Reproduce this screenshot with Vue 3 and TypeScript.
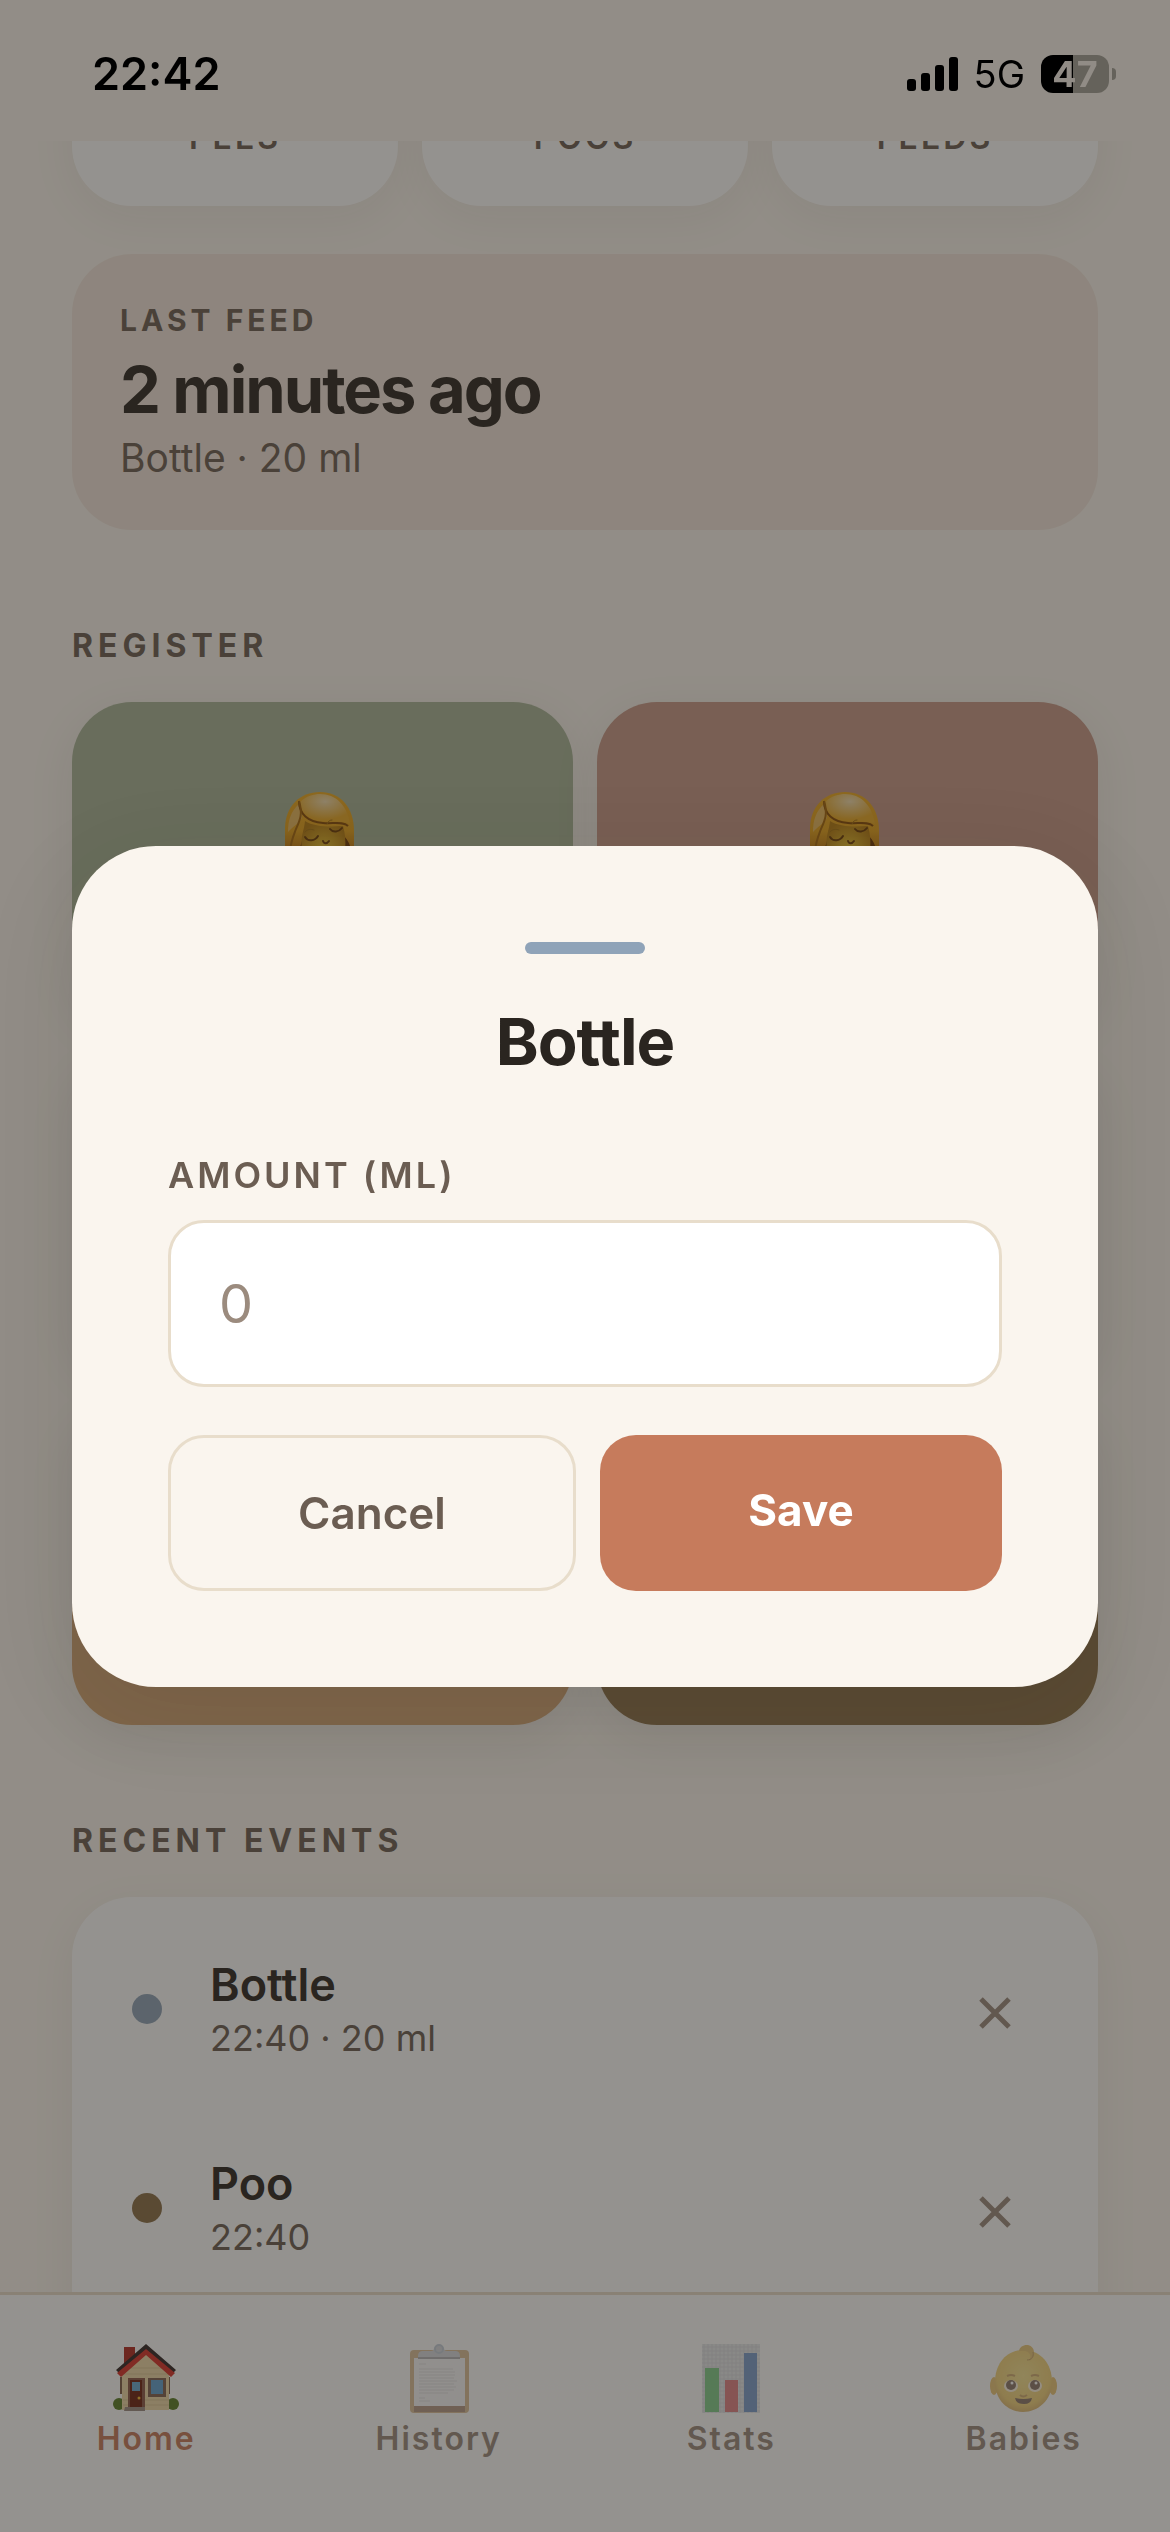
<script setup lang="ts">
import { ref } from 'vue'

interface Tile { label: string; tone: string; nursing?: boolean }
interface FeedEvent { id: number; title: string; detail: string; tone: string }
interface Tab { id: string; label: string }

const stats = ['Pees', 'Poos', 'Feeds']

const tiles: Tile[] = [
  { label: 'Left breast', tone: 'sage', nursing: true },
  { label: 'Right breast', tone: 'rose', nursing: true },
  { label: 'Bottle', tone: 'blue wide' },
  { label: 'Pee', tone: 'honey' },
  { label: 'Poo', tone: 'brown' },
]

const events = ref<FeedEvent[]>([
  { id: 1, title: 'Bottle', detail: '22:40 · 20 ml', tone: 'blue' },
  { id: 2, title: 'Poo', detail: '22:40', tone: 'brown' },
])

const tabs: Tab[] = [
  { id: 'home', label: 'Home' },
  { id: 'history', label: 'History' },
  { id: 'stats', label: 'Stats' },
  { id: 'babies', label: 'Babies' },
]
const activeTab = ref('home')
const amount = ref('')

function removeEvent(id: number): void {
  events.value = events.value.filter((e) => e.id !== id)
}
</script>

<template>
  <div class="screen">
    <header class="status">
      <span class="clock">22:42</span>
      <span class="indicators">
        <svg class="signal" viewBox="0 0 52 36" aria-hidden="true">
          <rect x="0" y="23" width="9" height="12" rx="3" />
          <rect x="14" y="17" width="9" height="18" rx="3" />
          <rect x="28" y="9" width="9" height="26" rx="3" />
          <rect x="42" y="1" width="9" height="34" rx="3" />
        </svg>
        <span class="network">5G</span>
        <span class="battery"><span class="level">47</span></span>
        <span class="nub"></span>
      </span>
    </header>

    <main class="scroll">
      <section class="stats">
        <div v-for="s in stats" :key="s" class="stat">{{ s }}</div>
      </section>

      <section class="last">
        <p class="last-label">Last feed</p>
        <p class="last-time">2 minutes ago</p>
        <p class="last-detail">Bottle · 20 ml</p>
      </section>

      <h2 class="section-title">Register</h2>
      <section class="tiles">
        <button v-for="t in tiles" :key="t.label" type="button" class="tile" :class="t.tone" :aria-label="t.label">
          <svg v-if="t.nursing" class="nursing" viewBox="2 0 84 84" aria-hidden="true">
            <defs>
              <linearGradient id="hair" x1="0" y1="0" x2="0" y2="1">
                <stop offset="0" stop-color="#f0ac20" />
                <stop offset="0.5" stop-color="#e8a41c" />
                <stop offset="1" stop-color="#984c04" />
              </linearGradient>
              <radialGradient id="shine" cx="0.5" cy="0.25" r="0.6">
                <stop offset="0" stop-color="#f4deb0" />
                <stop offset="1" stop-color="#ecac28" />
              </radialGradient>
              <radialGradient id="skin" cx="0.5" cy="0.6" r="0.6">
                <stop offset="0" stop-color="#ecc430" />
                <stop offset="1" stop-color="#b87c10" />
              </radialGradient>
            </defs>
            <path d="M6 84V43C6 20 21 6 41 6s34 15 34 39v39z" fill="url(#hair)" />
            <path d="M13 84c2-16 10-19 12-40 10 8 28 6 40 6 8 8 9 20 8 34z" fill="#6c3400" />
            <path d="M23 66C21 50 25 46 26 35c9 6 25 6 38 5 4 14 3 30-3 44H32c-5-5-8-10-9-18z" fill="url(#skin)" />
            <path d="M21 16C27 10 35 8 41 8c16 0 27 11 30 30-11-5-29 1-42-7-5-4-8-9-8-15z" fill="url(#shine)" />
            <path d="M20 18c-8 7-11 16-11 28 3-4 13-10 14-15 0-5-2-8-3-13z" fill="#ecbc60" />
            <path d="M20 15c0 13 9 21 24 22 10 1 20-2 25 3" fill="none" stroke="#8a4c06" stroke-width="2" />
            <path d="M20 15c4 13 1 19-3 28-3 8-5 12-6 22" fill="none" stroke="#a8680c" stroke-width="2" />
            <g fill="none" stroke="#6c3a04" stroke-width="2" stroke-linecap="round">
              <path d="M26 51c3 5 10 4 13-1M51 43c3 4 9 3 12-1" />
              <path d="M26 46c2-3 6-3 9-2M48 38c1-3 3-4 5-4" stroke="#a87412" stroke-width="1" />
              <path d="M44 55c1 3 4 3 6 0" />
            </g>
          </svg>
        </button>
      </section>

      <h2 class="section-title">Recent events</h2>
      <ul class="events">
        <li v-for="e in events" :key="e.id" class="event">
          <span class="dot" :class="e.tone"></span>
          <div class="event-text">
            <p class="event-title">{{ e.title }}</p>
            <p class="event-detail">{{ e.detail }}</p>
          </div>
          <button type="button" class="remove" :aria-label="`Remove ${e.title}`" @click="removeEvent(e.id)">
            <svg viewBox="0 0 88 88" aria-hidden="true">
              <path d="M31 34L59 62M59 34L31 62" fill="none" stroke="currentColor" stroke-width="5" />
            </svg>
          </button>
        </li>
      </ul>
    </main>

    <nav class="tabs">
      <button
        v-for="t in tabs"
        :key="t.id"
        type="button"
        class="tab"
        :class="{ active: t.id === activeTab }"
        @click="activeTab = t.id"
      >
        <svg v-if="t.id === 'home'" class="tab-icon" viewBox="0 0 70 70" aria-hidden="true">
          <ellipse cx="8" cy="61" rx="6" ry="6" fill="#587c26" />
          <ellipse cx="62" cy="61" rx="6" ry="6" fill="#587c26" />
          <path d="M9 34h4v17H9zM55 34h4v17h-4z" fill="#7c5c48" />
          <path d="M13 4h11v22H13z" fill="#b02820" />
          <path d="M11 29L35 7l23 23v37H11z" fill="#eed8a8" />
          <path d="M12 25h46M12 31h46M12 57h46M12 62h46" stroke="#dcc494" stroke-width="1" />
          <path d="M35 1L5 27l4 4L35 8l26 23 4-4z" fill="#302424" />
          <path d="M35 6L6 30l4 4 25-22 25 22 4-4z" fill="#d83028" />
          <path d="M17 35h17v30H17z" fill="#8c5848" />
          <path d="M19 37h12v27H19z" fill="#6c2010" />
          <path d="M21 39h8v9h-8z" fill="#68a8d0" />
          <circle cx="28" cy="55" r="1.5" fill="#f0b830" />
          <path d="M37 35h18v19H37z" fill="#806050" />
          <path d="M40 37h12v14H40z" fill="#60a0d0" />
          <path d="M14 64h20v4H13z" fill="#9c8c84" />
        </svg>

        <svg v-else-if="t.id === 'history'" class="tab-icon" viewBox="0 0 70 70" aria-hidden="true">
          <rect x="6" y="7" width="59" height="63" rx="4" fill="#c89858" />
          <path d="M10 15h51v48H10z" fill="#f4f4f8" />
          <path d="M10 63h51v6H10z" fill="#88583c" />
          <path d="M15 21h7M15 26h34M15 29h36M15 32h36M15 35h35M15 38h38M15 41h35M15 44h37M15 47h35M15 50h29M15 55h6M15 58h11" stroke="#d4d4d8" stroke-width="1" />
          <path d="M14 16v-3q0-5 5-5h8q3 0 3-3 5-6 10 0 0 3 3 3h8q5 0 5 5v3z" fill="#c0c4cc" />
          <path d="M14 14h42v2H14z" fill="#84848c" />
          <circle cx="35" cy="6" r="4" fill="none" stroke="#a0b0c4" stroke-width="2" />
        </svg>

        <svg v-else-if="t.id === 'stats'" class="tab-icon" viewBox="0 0 70 70" aria-hidden="true">
          <path d="M6 1h58v69H6z" fill="#dce0e6" />
          <path
            d="M6 4h58M6 8h58M6 12h58M6 16h58M6 20h58M6 24h58M6 28h58M6 32h58M6 36h58M6 40h58M6 44h58M6 48h58M6 52h58M6 56h58M6 60h58M6 64h58M6 68h58M8 1v69M12 1v69M16 1v69M20 1v69M24 1v69M28 1v69M32 1v69M36 1v69M40 1v69M44 1v69M48 1v69M52 1v69M56 1v69M60 1v69"
            stroke="#c4c8d0"
            stroke-width="1"
          />
          <path d="M9 25h14v44H9z" fill="#30b040" />
          <path d="M29 37h13v32H29z" fill="#d03038" />
          <path d="M48 10h13v59H48z" fill="#2860b0" />
        </svg>

        <svg v-else class="tab-icon" viewBox="0 0 70 70" aria-hidden="true">
          <defs>
            <radialGradient id="face" cx="0.5" cy="0.42" r="0.62">
              <stop offset="0" stop-color="#f4d450" />
              <stop offset="0.75" stop-color="#ecb828" />
              <stop offset="1" stop-color="#c08018" />
            </radialGradient>
          </defs>
          <ellipse cx="5" cy="43" rx="4" ry="9" fill="#e0a424" />
          <ellipse cx="64" cy="43" rx="4" ry="9" fill="#e0a424" />
          <path d="M34 7C17 7 6 21 6 39c0 18 13 30 28 30s29-12 29-30C63 21 52 7 34 7z" fill="url(#face)" />
          <path d="M30 8c1-8 16-9 15 3 0 3-2 6-5 7 3-5 1-9-4-10z" fill="#dca428" />
          <path d="M38 17c5 0 7-4 6-8" fill="none" stroke="#a86c10" stroke-width="1" />
          <ellipse cx="22" cy="43" rx="7" ry="6" fill="#fff0d0" />
          <ellipse cx="46" cy="43" rx="7" ry="6" fill="#fff0d0" />
          <circle cx="22" cy="42" r="5" fill="#40200c" />
          <circle cx="46" cy="42" r="5" fill="#40200c" />
          <circle cx="23" cy="40" r="1.5" fill="#fff" />
          <circle cx="47" cy="40" r="1.5" fill="#fff" />
          <path d="M18 33q4-2 8 0M42 33q4-2 8 0M31 52q3 3 7 0" fill="none" stroke="#b47818" stroke-width="2" />
          <path d="M26 55q8 2 17 0-1 6-8 6-8 0-9-6z" fill="#40200c" />
        </svg>
        <span class="tab-label">{{ t.label }}</span>
      </button>
    </nav>

    <div class="overlay">
      <form class="dialog" role="dialog" aria-labelledby="dialog-title" @submit.prevent>
        <span class="handle"></span>
        <h1 id="dialog-title" class="dialog-title">Bottle</h1>
        <label class="field-label" for="amount">Amount (ml)</label>
        <input id="amount" v-model="amount" class="field" type="text" inputmode="numeric" placeholder="0" />
        <div class="actions">
          <button type="button" class="btn cancel">Cancel</button>
          <button type="submit" class="btn save">Save</button>
        </div>
      </form>
    </div>
  </div>
</template>

<style>
body {
  margin: 0;
  background: #faf5ee;
}
</style>

<style scoped>
.screen {
  display: flex;
  flex-direction: column;
  height: 100vh;
  overflow: hidden;
  background: #faf5ee;
  color: #2a2520;
  font-family: Inter, "Liberation Sans", sans-serif;
}
.screen *,
.screen *::before {
  box-sizing: border-box;
}
button,
input {
  margin: 0;
  font-family: inherit;
}
p,
h1,
h2,
ul {
  margin: 0;
  padding: 0;
}

/* Status bar stays above the dimmed layer */
.status {
  position: relative;
  z-index: 2;
  flex: none;
  display: flex;
  justify-content: space-between;
  align-items: center;
  height: 141px;
  padding: 7px 54px 0 92px;
  color: #000;
}
.clock {
  font-size: 45px;
  font-weight: 600;
  line-height: 56px;
}
.indicators {
  display: flex;
  align-items: center;
}
.signal {
  width: 52px;
  height: 36px;
}
.network {
  margin: 0 16px 0 15px;
  font-size: 38px;
  font-weight: 400;
  line-height: 40px;
}
.battery {
  width: 68px;
  height: 38px;
  border-radius: 12px;
  background: linear-gradient(90deg, #000 47%, #65625b 47%);
}
.level {
  display: block;
  text-align: center;
  color: #918c86;
  font-size: 36px;
  font-weight: 700;
  line-height: 38px;
}
.nub {
  width: 4px;
  height: 12px;
  margin-left: 3px;
  border-radius: 0 6px 6px 0;
  background: #65625b;
}

.scroll {
  flex: 1;
  min-height: 0;
  overflow: hidden;
  padding: 0 72px;
}
.stats {
  display: grid;
  grid-template-columns: repeat(3, 1fr);
  gap: 24px;
  margin-top: -155px;
}
.stat {
  height: 220px;
  padding-top: 132px;
  border-radius: 60px;
  background: #fff;
  box-shadow: 0 12px 48px rgba(42, 37, 32, 0.06);
  text-align: center;
  text-transform: uppercase;
  color: #6b5d52;
  font-size: 32px;
  font-weight: 600;
  line-height: 40px;
  letter-spacing: 3px;
}
.last {
  margin-top: 48px;
  padding: 48px;
  border-radius: 60px;
  background: #f2e5dc;
}
.last-label {
  margin-bottom: 12px;
  color: #6b5d52;
  font-size: 30px;
  font-weight: 700;
  line-height: 36px;
  letter-spacing: 4px;
  text-transform: uppercase;
}
.last-time {
  margin-bottom: 4px;
  font-size: 65px;
  font-weight: 700;
  line-height: 80px;
  letter-spacing: -2px;
}
.last-detail {
  color: #6b5d52;
  font-size: 39px;
  line-height: 48px;
}
.section-title {
  margin: 96px 0 36px;
  color: #6b5d52;
  font-size: 32px;
  font-weight: 700;
  line-height: 40px;
  letter-spacing: 5px;
  text-transform: uppercase;
}
.tiles {
  display: grid;
  grid-template-columns: repeat(2, 1fr);
  grid-auto-rows: 325px;
  gap: 24px;
}
.tile {
  display: flex;
  justify-content: center;
  padding: 84px 0 0;
  border: 0;
  border-radius: 60px;
  box-shadow: 0 12px 48px rgba(42, 37, 32, 0.08);
}
.nursing {
  width: 84px;
  height: 84px;
}
.wide {
  grid-column: span 2;
}
.sage {
  background: #a8b598;
}
.rose {
  background: #c89888;
}
.blue {
  background: #8fa3b8;
}
.honey {
  background: #d4a574;
}
.brown {
  background: #8b6f47;
}

.events {
  padding: 12px 0 120px;
  border-radius: 60px;
  background: #fff;
  box-shadow: 0 12px 48px rgba(42, 37, 32, 0.06);
  list-style: none;
}
.event {
  display: flex;
  align-items: center;
  padding: 44px 60px;
}
.dot {
  width: 30px;
  height: 30px;
  margin-right: 48px;
  border-radius: 50%;
}
.event-text {
  flex: 1;
  padding-top: 4px;
}
.event-title {
  font-size: 45px;
  font-weight: 600;
  line-height: 55px;
}
.event-detail {
  color: #6b5d52;
  font-size: 36px;
  line-height: 52px;
}
.remove {
  width: 88px;
  height: 88px;
  padding: 0;
  border: 0;
  background: none;
  color: #9b8b7e;
}
.remove svg {
  display: block;
}

.tabs {
  flex: none;
  display: grid;
  grid-template-columns: repeat(4, 1fr);
  height: 240px;
  border-top: 3px solid #e8ddcb;
  background: #fff;
}
.tab {
  display: flex;
  flex-direction: column;
  align-items: center;
  gap: 6px;
  padding: 48px 0 0;
  border: 0;
  background: none;
  color: #9b8b7e;
}
.tab-icon {
  width: 70px;
  height: 70px;
  opacity: 0.6;
}
.active {
  color: #c67b5c;
}
.active .tab-icon {
  opacity: 1;
}
.tab-label {
  font-size: 32px;
  font-weight: 600;
  line-height: 40px;
  letter-spacing: 2px;
}

.overlay {
  position: fixed;
  inset: 0;
  z-index: 1;
  display: flex;
  flex-direction: column;
  justify-content: center;
  padding: 0 72px;
  background: rgba(42, 37, 32, 0.5);
}
.dialog {
  display: flex;
  flex-direction: column;
  padding: 96px;
  border-radius: 84px;
  background: #faf5ee;
  box-shadow: 0 24px 96px rgba(42, 37, 32, 0.1);
}
.handle {
  align-self: center;
  width: 120px;
  height: 12px;
  border-radius: 6px;
  background: #8fa3b8;
}
.dialog-title {
  margin: 48px 0 72px;
  text-align: center;
  font-size: 65px;
  font-weight: 700;
  line-height: 80px;
  letter-spacing: -1px;
}
.field-label {
  margin-bottom: 24px;
  color: #6b5d52;
  font-size: 36px;
  font-weight: 600;
  line-height: 42px;
  letter-spacing: 3px;
  text-transform: uppercase;
}
.field {
  width: 100%;
  height: 167px;
  padding: 0 48px;
  border: 3px solid #e8ddcb;
  border-radius: 36px;
  outline: 0;
  background: #fff;
  color: #2a2520;
  font-size: 54px;
}
.field::placeholder {
  color: #9b8b7e;
  opacity: 1;
}
.actions {
  display: flex;
  gap: 24px;
  margin-top: 48px;
}
.btn {
  flex: 1 1 0;
  display: flex;
  justify-content: center;
  align-items: flex-start;
  padding: 48px 0;
  border: 0;
  border-radius: 36px;
  font-size: 44px;
  line-height: 54px;
}
.cancel {
  border: 3px solid #e8ddcb;
  background: none;
  color: #6b5d52;
  font-weight: 600;
}
.save {
  background: #c67b5c;
  color: #fff;
  font-weight: 700;
}
</style>
